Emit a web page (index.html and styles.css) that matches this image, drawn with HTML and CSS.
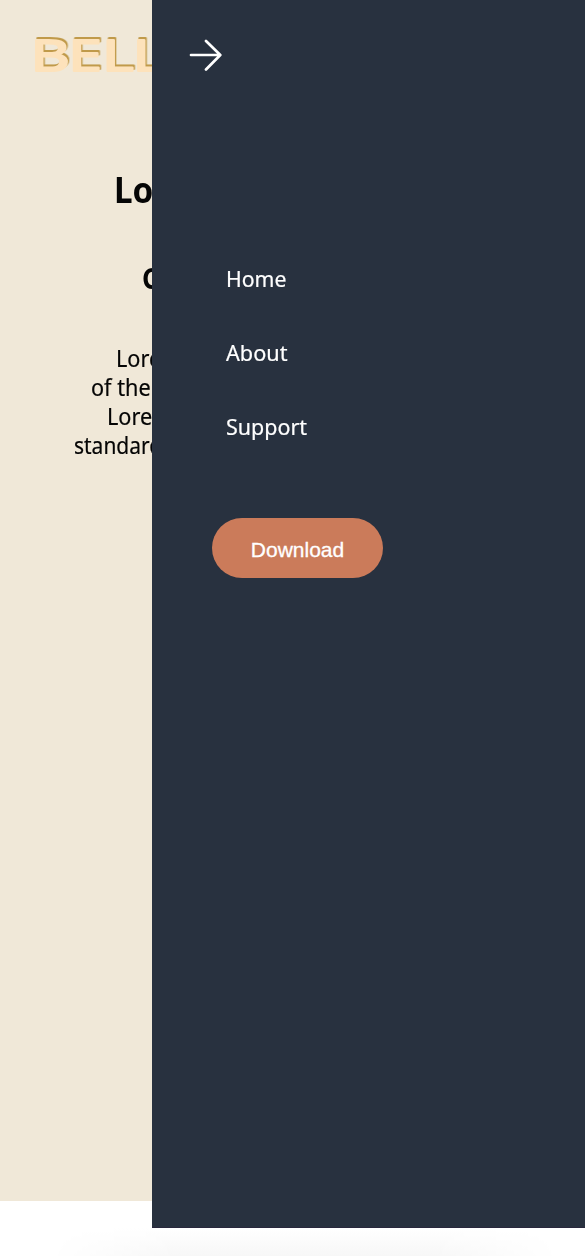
FILE: index.html
```html
<!DOCTYPE html>
<html lang="en">
<head>
<meta charset="utf-8">
<title>Bell</title>
<link rel="stylesheet" href="styles.css">
</head>
<body>
<div class="screen">
  <main class="page">
    <svg class="logo" width="152" height="50" viewBox="0 0 152 50">
      <g transform="scale(1.36 1)">
        <text class="logo-face" y="40.8" x="22.6 50.4 75.2 97.6">BELL</text>
      </g>
    </svg>
    <h1 class="title"><span class="fit">Lo</span></h1>
    <h2 class="subtitle"><span class="fit">C</span></h2>
    <p class="copy">
      <span class="line line-a">Lore</span>
      <span class="line line-b">of the</span>
      <span class="line line-c">Lore</span>
      <span class="line line-d">standard</span>
    </p>
  </main>
  <aside class="drawer">
    <svg class="arrow" width="34" height="34" viewBox="0 0 34 34"><path d="M3 17H32M18 3L32.3 17L18 31.5"/></svg>
    <nav class="menu">
      <a class="item">Home</a>
      <a class="item about">About</a>
      <a class="item support">Support</a>
    </nav>
    <button class="download">Download</button>
  </aside>
</div>
<div class="shade"></div>
</body>
</html>
```
FILE: styles.css
```css
* { box-sizing: border-box; }
body { margin: 0; background: #fff; font-family: "Noto Sans", sans-serif; overflow: hidden; }
.screen { display: flex; align-items: flex-start; width: 585px; height: 1228px; }
.page { width: 152px; height: 1201px; background: #f0e8d8; overflow: hidden; color: #050505; padding-top: 30px; flex: none; }
.logo { display: block; }
.logo-face { font-family: "Noto Sans", sans-serif; font-size: 44px; font-weight: 400; fill: #fde2bb; stroke: #fde2bb; stroke-width: 2.2; stroke-linejoin: round; filter: drop-shadow(1.8px -1.6px .3px #c09a4a); }
.title { margin: 86px 0 0 113.6px; font-size: 35px; line-height: 48px; font-weight: 700; }
.subtitle { margin: 44px 0 0 142px; font-size: 28px; line-height: 40px; font-weight: 700; }
.fit { display: inline-block; transform: scaleX(.95); transform-origin: left; }
.copy { margin: 46px 0 0; font-size: 22.8px; line-height: 29px; }
.line { display: block; white-space: nowrap; width: max-content; transform: scaleX(.95); transform-origin: left; -webkit-text-stroke: .2px #050505; }
.line-a { margin-left: 115.5px; }
.line-b { margin-left: 91px; }
.line-c { margin-left: 106.5px; }
.line-d { margin-left: 74px; transform: scaleX(.92); }
.drawer { width: 433px; height: 1228px; flex: none; background: #28313f; border-bottom: 1px solid #29273d; color: #fff; padding: 38px 0 0 36px; }
.arrow { display: block; fill: none; stroke: #fff; stroke-width: 2.7; stroke-linecap: round; stroke-linejoin: round; }
.menu { display: flex; flex-direction: column; align-items: flex-start; gap: 44px; margin: 192px 0 0 38px; }
.item { font-size: 22.6px; line-height: 30px; transform: scaleX(.94); transform-origin: left; -webkit-text-stroke: .2px #fff; }
.about { transform: scaleX(.96); }
.support { transform: scaleX(.95); }
.download { display: block; width: 171px; height: 60px; margin: 76px 0 0 24px; padding: 4px 0 0; border: 0; border-radius: 30px; background: #cb7b5a; color: #fff; font-family: "Liberation Sans", Arial, sans-serif; font-size: 21px; -webkit-text-stroke: .3px #fff; }
.shade { width: 510px; height: 28px; margin-left: 50px; background: linear-gradient(#fff, #f7f7f7); -webkit-mask-image: linear-gradient(90deg, transparent, #000 25%, #000 75%, transparent); mask-image: linear-gradient(90deg, transparent, #000 25%, #000 75%, transparent); }
```
